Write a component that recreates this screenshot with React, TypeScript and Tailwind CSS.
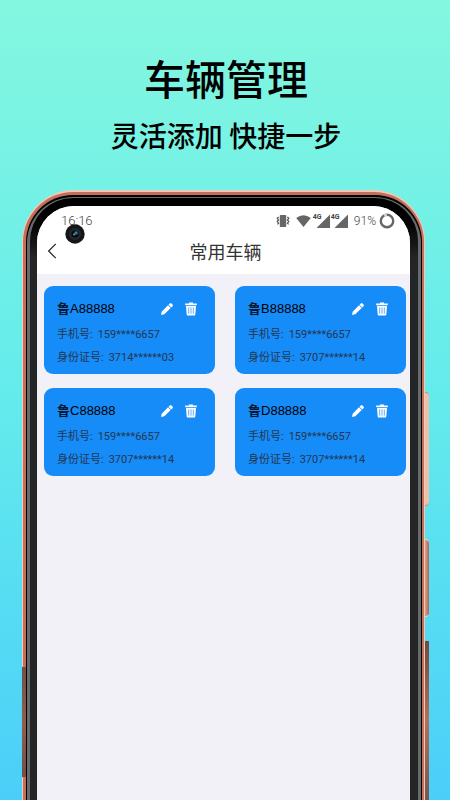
import React from 'react';

type Vehicle = {
  plate: string;
  phone: string;
  idNumber: string;
};

const vehicles: Vehicle[] = [
  { plate: 'A88888', phone: '159****6657', idNumber: '3714******03' },
  { plate: 'B88888', phone: '159****6657', idNumber: '3707******14' },
  { plate: 'C88888', phone: '159****6657', idNumber: '3707******14' },
  { plate: 'D88888', phone: '159****6657', idNumber: '3707******14' },
];

const PencilIcon = () => (
  <svg viewBox="0 0 12 12" className="h-3 w-3" fill="#fff">
    <path d="M0 12 L0.7 8.8 L7 2.3 L9.7 5 L3.3 11.3 Z" />
    <path d="M7.5 1.8 L8.8 0.5 Q9.6 -0.3 10.5 0.5 L11.5 1.5 Q12.3 2.4 11.5 3.2 L10.2 4.5 Z" />
  </svg>
);

const TrashIcon = () => (
  <svg viewBox="0 0 12 14" className="h-3.5 w-3" fill="#fff">
    <path d="M4 0.5 H8 V1.6 H11.8 V3.3 H0.2 V1.6 H4 Z" />
    <path d="M1 4 H11 L10.3 12.4 Q10.2 13.6 9 13.6 H3 Q1.8 13.6 1.7 12.4 Z" />
    <path
      d="M3.7 5.4 V11.7 M6 5.4 V11.7 M8.3 5.4 V11.7"
      stroke="#4ba7fa"
      strokeWidth="0.9"
    />
  </svg>
);

const SignalIcon = () => (
  <span className="relative block h-3.5 w-[15px]">
    <svg viewBox="0 0 15 14" className="h-full w-full" fill="#666">
      <path d="M15 0.5 V14 H1.5 Z" />
    </svg>
    <span className="absolute -left-0.5 top-0 bg-white text-[7px] leading-[6px] font-bold text-[#444]">
      4G
    </span>
  </span>
);

const StatusBar = () => (
  <div className="flex h-7 items-center justify-between pt-0.5 pl-6 pr-[15px] font-['Roboto',sans-serif] font-light text-[#444]">
    <span className="text-[13px]">16:16</span>
    <div className="flex items-center text-xs">
      <svg viewBox="0 0 14 12" className="h-3 w-3.5" fill="#666">
        <rect x="3.8" y="0" width="6.4" height="12" rx="0.8" />
        <path
          d="M2.6 2 L1.2 3.4 L2.6 5 L1.2 6.6 L2.6 8.2 L1.4 9.4 M11.4 2 L12.8 3.4 L11.4 5 L12.8 6.6 L11.4 8.2 L12.6 9.4"
          fill="none"
          stroke="#555"
          strokeWidth="1.2"
        />
      </svg>
      <svg viewBox="0 0 15 12" className="ml-1.5 h-3 w-[15px]" fill="#666">
        <path d="M0.2 3 Q7.5 -2.6 14.8 3 L7.5 12 Z" />
      </svg>
      <span className="ml-1 flex gap-[3px]">
        <SignalIcon />
        <SignalIcon />
      </span>
      <span className="ml-1.5">91%</span>
      <svg viewBox="0 0 16 16" className="ml-[3px] h-4 w-4" fill="none">
        <circle cx="8" cy="8" r="6.2" stroke="#666" strokeWidth="2.4" />
        <path d="M5 2.6 A6.2 6.2 0 0 1 8 1.8" stroke="#ccc" strokeWidth="2.4" />
      </svg>
    </div>
  </div>
);

const VehicleCard = ({ plate, phone, idNumber }: Vehicle) => (
  <article className="rounded-[9px] bg-[#168cf8] px-[13px] pt-3.5 pb-2 font-['Roboto','Noto_Sans_CJK_SC',sans-serif] text-[11px] leading-4 text-[#243650]">
    <div className="flex items-center">
      <h2 className="flex-1 text-[13px] leading-[18px] text-black">
        <span className="font-bold text-[#0a1730]">鲁</span>
        <span className="font-['Liberation_Sans',sans-serif]">{plate}</span>
      </h2>
      <button type="button" aria-label="编辑" className="mr-3 cursor-pointer">
        <PencilIcon />
      </button>
      <button type="button" aria-label="删除" className="mr-[5px] cursor-pointer">
        <TrashIcon />
      </button>
    </div>
    <p className="mt-[9px] flex gap-[5px]">
      <span>手机号:</span>
      <span>{phone}</span>
    </p>
    <p className="mt-[7px] flex gap-[5px]">
      <span>身份证号:</span>
      <span>{idNumber}</span>
    </p>
  </article>
);

const App = () => {
  return (
    <main className="flex h-screen flex-col overflow-hidden bg-linear-to-b from-[#84f7df] via-[#63ebec] to-[#4bcef9] font-['Noto_Sans_CJK_SC',sans-serif]">
      <header className="h-[190px] shrink-0 pt-[51px] pl-0.5 text-center text-black">
        <h1 className="text-[41px] leading-[52px] font-medium">车辆管理</h1>
        <p className="mt-3 text-[28px] leading-10 font-medium">灵活添加 快捷一步</p>
      </header>

      <div className="relative ml-[22px] mr-[25px] flex flex-1 flex-col rounded-t-[52px] bg-[#f5c9b9] px-px pt-0.5">
        <i className="absolute -right-1 top-[202px] h-[114px] w-1 rounded-r-sm border-y border-[#d88570] bg-[#f0bfac]" />
        <i className="absolute -right-1 top-[349px] h-[78px] w-1 rounded-r-sm border-y border-[#f6d5c8] bg-linear-to-r from-[#e0a08b] to-[#a86856]" />
        <i className="absolute -right-1 top-[451px] h-[159px] w-1 bg-linear-to-b from-[#704a40] via-[#b56e5b] to-[#75574f]" />
        <i className="absolute left-0 top-[477px] h-[110px] w-1 bg-linear-to-b from-[#6e5149] via-[#925d4d] to-[#705047]" />
        <div className="flex flex-1 flex-col rounded-t-[50px] bg-[#c46f5a] pl-[3px] pr-0.5 pt-[3px]">
          <div className="flex flex-1 flex-col rounded-t-[47px] bg-black px-px pt-0.5">
            <div className="flex flex-1 flex-col rounded-t-[46px] bg-[#68696b] px-[3px] pt-px">
              <div className="flex flex-1 flex-col rounded-t-[43px] bg-linear-to-b from-black from-0% to-[#242526] to-10% pl-[7px] pr-2 pt-2">
                <div className="relative flex flex-1 flex-col overflow-hidden rounded-t-[37px] bg-[#f1f1f7]">
                  <div className="bg-white">
                    <StatusBar />
                    <nav className="flex h-10 items-center px-2.5 pb-1.5">
                      <button type="button" aria-label="返回" className="cursor-pointer">
                        <svg viewBox="0 0 10 16" className="h-4 w-2.5">
                          <path
                            d="M8.8 0.8 L1.6 8 L8.8 15.2"
                            fill="none"
                            stroke="#222"
                            strokeWidth="1.2"
                          />
                        </svg>
                      </button>
                      <h2 className="flex-1 pr-1.5 text-center text-lg leading-6 text-[#333]">
                        常用车辆
                      </h2>
                    </nav>
                  </div>
                  {/* front camera */}
                  <svg viewBox="0 0 20 20" className="absolute left-7 top-[18px] h-5 w-5">
                    <circle cx="10" cy="10" r="9.7" fill="#151617" />
                    <circle cx="10" cy="10" r="6" fill="#24272a" />
                    <circle cx="10" cy="10" r="3.6" fill="#05080d" />
                    <circle cx="11" cy="9" r="1.7" fill="#2583b5" />
                    <circle cx="9" cy="10.5" r="1" fill="#8b9299" />
                  </svg>
                  <section className="grid grid-cols-2 gap-x-5 gap-y-3.5 pl-[7px] pr-1 pt-3">
                    {vehicles.map((vehicle) => (
                      <VehicleCard key={vehicle.plate} {...vehicle} />
                    ))}
                  </section>
                </div>
              </div>
            </div>
          </div>
        </div>
      </div>
    </main>
  );
};

export default App;
